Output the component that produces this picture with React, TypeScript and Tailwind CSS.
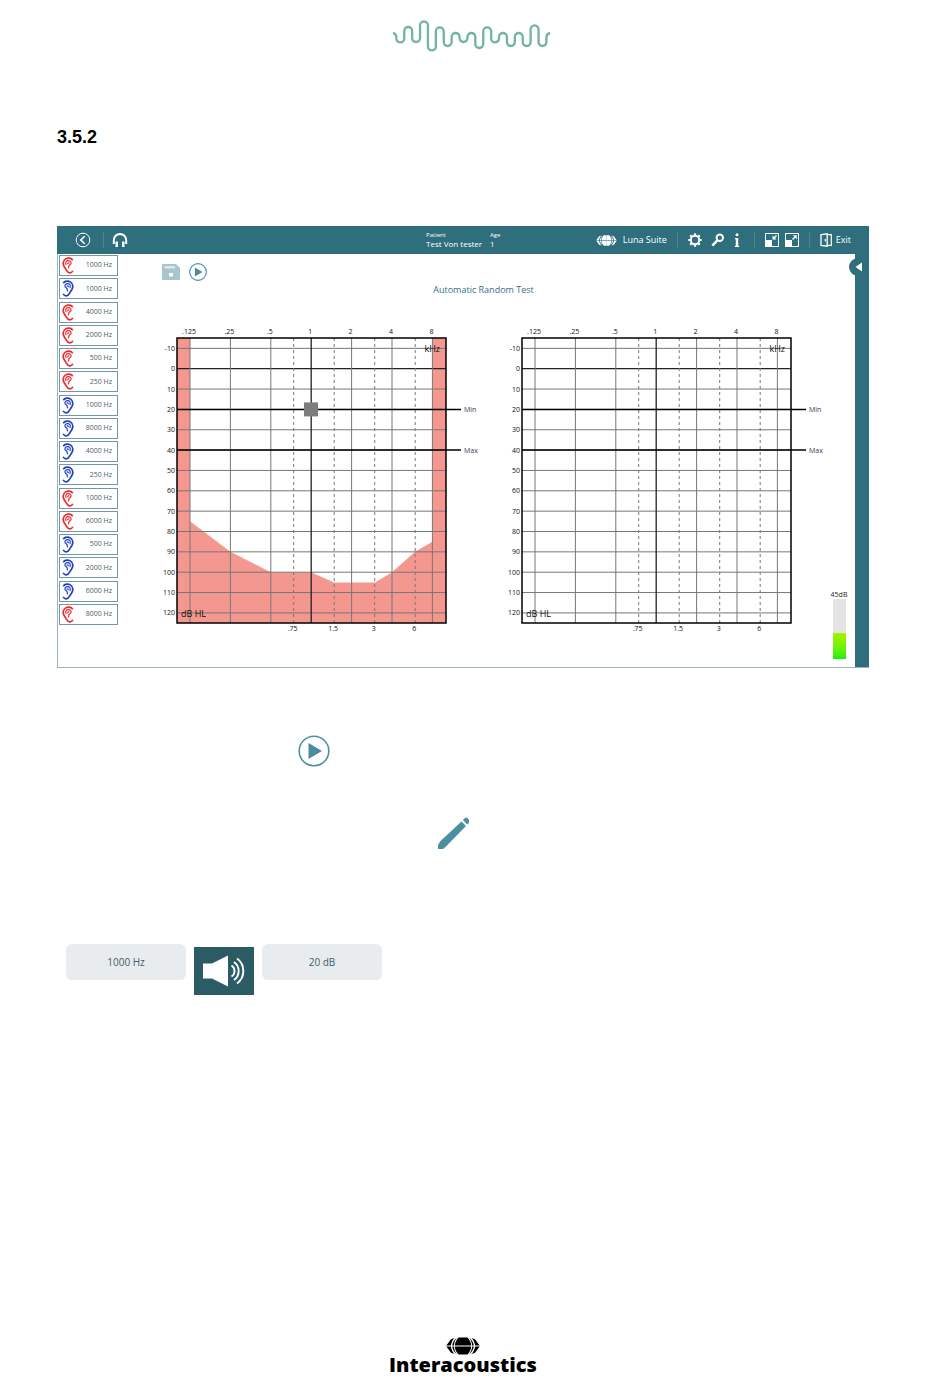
type Ear = "right" | "left";

const steps: { ear: Ear; hz: number }[] = [
  { ear: "right", hz: 1000 },
  { ear: "left", hz: 1000 },
  { ear: "right", hz: 4000 },
  { ear: "right", hz: 2000 },
  { ear: "right", hz: 500 },
  { ear: "right", hz: 250 },
  { ear: "left", hz: 1000 },
  { ear: "left", hz: 8000 },
  { ear: "left", hz: 4000 },
  { ear: "left", hz: 250 },
  { ear: "right", hz: 1000 },
  { ear: "right", hz: 6000 },
  { ear: "left", hz: 500 },
  { ear: "left", hz: 2000 },
  { ear: "left", hz: 6000 },
  { ear: "right", hz: 8000 },
];

// turning points of the wave, left to right
const waveLevels = [98, 52, 97, 35, 122, 53, 109, 70, 97, 70, 115, 53, 98, 70, 109, 70, 109, 47, 109];

function wavePath() {
  const r = 11.85;
  let x = 50;
  let d = "M40 70 Q50 72 50 84";
  waveLevels.forEach((y, i) => {
    const down = i % 2 === 0;
    const edge = down ? y - r : y + r;
    d += ` V${edge} A${r} ${r} 0 0 ${down ? 0 : 1} ${x + 2 * r} ${edge}`;
    x += 2 * r;
  });
  return d + ` V84 Q${x} 72 ${x + 11} 70`;
}

function Wave() {
  return (
    <svg width="160" height="34" viewBox="37 28 480 102" fill="none" aria-hidden="true">
      <path d={wavePath()} stroke="#68bb9b" strokeWidth="7" />
      <path d={wavePath()} stroke="#8fa79d" strokeWidth="2" />
    </svg>
  );
}

function EarIcon({ ear }: { ear: Ear }) {
  const color = ear === "right" ? "#ee2a2e" : "#2440c0";
  return (
    <svg width="12" height="17" viewBox="0 0 12 17" fill="none" stroke={color} strokeLinecap="round" aria-hidden="true">
      <g transform={ear === "left" ? "matrix(-1 0 0 1 12 0)" : undefined}>
        <path strokeWidth="1.700" d="M10.300 2.600C8.800.8 5.700.6 3.700 1.900 1.300 3.400.8 6.200 1.700 8.600c.7 1.900 2 3 2.900 4.700.8 1.600 1.900 2.600 3.400 2.500 1.200-.1 2-.6 2.500-1.400" />
        <path strokeWidth="1.200" d="M4 7.600C3.100 5.400 4.300 3.600 6.300 3.600c1.900 0 3 1.200 2.700 2.700-.3 1.300-1.700 1.400-2.100 2.400-.3.800.1 1.500-.5 2.200" />
        <path strokeWidth="1.100" d="M5.600 6.800c.3-.8.900-1.100 1.500-.9" />
      </g>
    </svg>
  );
}

function PlayIcon({ size, stroke }: { size: number; stroke: number }) {
  return (
    <svg width={size} height={size} viewBox="0 0 32 32" aria-hidden="true">
      <circle cx="16" cy="16" r="14.800" fill="none" stroke="#4d8fa0" strokeWidth={stroke} />
      <path d="M10.500 8 24 16 10.500 24z" fill="#4a8c9d" />
    </svg>
  );
}

function GlobeQuarter() {
  return (
    <>
      <path d="M17 .5h-4.500C10.500 2.500 9 5.500 8.800 8.500H17z" />
      <path d="M10.800.8C8.600 2.300 6.700 5.300 6.200 8.500h1.700C8.200 5.400 9.200 2.900 10.800.8z" />
      <path d="M8.500 1 5 2.200.3 8.500h4.500C5.300 5.600 6.500 3 8.500 1z" />
    </>
  );
}

function Globe({ width, height }: { width: number; height: number }) {
  return (
    <svg width={width} height={height} viewBox="0 0 34 18" fill="currentColor" aria-hidden="true">
      <GlobeQuarter />
      <g transform="matrix(-1 0 0 1 34 0)">
        <GlobeQuarter />
      </g>
      <g transform="matrix(1 0 0 -1 0 18)">
        <GlobeQuarter />
      </g>
      <g transform="matrix(-1 0 0 -1 34 18)">
        <GlobeQuarter />
      </g>
    </svg>
  );
}

function Divider() {
  return <span className="h-4 w-px bg-[#4f8592]" />;
}

function TopBar() {
  return (
    <header className="grid h-7 grid-cols-[5fr_6fr] items-center bg-[#2f6e7c] text-white">
      <div className="flex items-center gap-3 pl-[18px]">
        <button aria-label="Back">
          <svg width="16" height="16" viewBox="0 0 16 16" fill="none" stroke="currentColor">
            <circle cx="8" cy="8" r="6.800" />
            <path strokeWidth="1.600" d="M9.700 4.200 5.800 8l3.900 3.800" />
          </svg>
        </button>
        <Divider />
        <button aria-label="Headphones" className="-ml-1">
          <svg width="16" height="16" viewBox="0 0 16 16" fill="none" stroke="currentColor">
            <path strokeWidth="2" d="M1.800 12V8.200a6.200 6.200 0 0 1 12.400 0V12" />
            <path fill="currentColor" stroke="none" d="M3.500 9.500H6V15H3.500zM10 9.500h2.500V15H10z" />
          </svg>
        </button>
      </div>
      <div className="flex items-center justify-between pr-[18px]">
        <dl className="flex gap-2">
          <div>
            <dt className="text-[6px] leading-[8px]">Patient</dt>
            <dd className="text-[8px] leading-[10px]">Test Von tester</dd>
          </div>
          <div>
            <dt className="text-[6px] leading-[8px]">Age</dt>
            <dd className="text-[8px] leading-[10px]">1</dd>
          </div>
        </dl>
        <div className="flex items-center gap-[10px]">
          <span className="flex items-center gap-[6px] text-[9px]">
            <Globe width={21} height={11} />
            Luna Suite
          </span>
          <Divider />
          <div className="flex items-center gap-[9px] pr-1">
            <button aria-label="Settings">
              <svg width="14" height="14" viewBox="0 0 14 14" fill="none" stroke="currentColor">
                <circle cx="7" cy="7" r="4.200" strokeWidth="2" />
                <path strokeWidth="2.200" d="M7 .3v2M7 11.700v2M.3 7h2M11.700 7h2M2.300 2.300l1.300 1.300M10.400 10.400l1.300 1.300M2.300 11.700l1.300-1.300M10.400 3.600l1.300-1.300" />
              </svg>
            </button>
            <button aria-label="Tools">
              <svg width="14" height="14" viewBox="0 0 14 14" fill="none" stroke="currentColor">
                <circle cx="8.800" cy="4.800" r="3.200" strokeWidth="2" />
                <path strokeWidth="2.400" d="M6.600 7.200 1.300 12.700" />
              </svg>
            </button>
            <button aria-label="Information">
              <svg width="6" height="14" viewBox="0 0 6 14" fill="currentColor">
                <circle cx="3" cy="1.800" r="1.500" />
                <path d="M1 5h3.200v7.800h1V14H.8v-1.200h1V6.200H1z" />
              </svg>
            </button>
          </div>
          <Divider />
          <div className="flex items-center gap-[6px]">
            <button aria-label="Shrink window">
              <svg width="14" height="14" viewBox="0 0 14 14" fill="none" stroke="currentColor">
                <path d="M.5.5h13v13H.5z" />
                <path fill="currentColor" stroke="none" d="M0 7h7v7H0zM7.500 2.500v4h4z" />
                <path strokeWidth="1.400" d="m8.500 5.500 3-3" />
              </svg>
            </button>
            <button aria-label="Enlarge window">
              <svg width="14" height="14" viewBox="0 0 14 14" fill="none" stroke="currentColor">
                <path d="M.5.5h13v13H.5z" />
                <path fill="currentColor" stroke="none" d="M0 7h7v7H0zM7.800 2.200h4v4z" />
                <path strokeWidth="1.400" d="m7.500 6.500 3-3" />
              </svg>
            </button>
          </div>
          <Divider />
          <button className="flex items-center gap-1 text-[9px]">
            <svg width="12" height="14" viewBox="0 0 12 14" fill="none" stroke="currentColor" aria-hidden="true">
              <path strokeWidth="1.200" d="M7 1.600h4.300v10.800H7" />
              <path strokeWidth="1.300" d="M1 1.600 7.200.8v12.400L1 12.400z" />
              <path strokeWidth="1.200" d="M5.300 6v2.500" />
            </svg>
            Exit
          </button>
        </div>
      </div>
    </header>
  );
}

const colX = (i: number) => 34 + i * 40.4;
const rowY = (db: number) => 46.7 + db * 2.035;
const topLabels = [".125", ".25", ".5", "1", "2", "4", "8"];
const halfOctaves = [
  { x: 137.7, label: ".75" },
  { x: 178.2, label: "1.5" },
  { x: 218.7, label: "3" },
  { x: 259.2, label: "6" },
];
const levels = [-10, 0, 10, 20, 30, 40, 50, 60, 70, 80, 90, 100, 110, 120];

function Audiogram({ label, active = false }: { label: string; active?: boolean }) {
  return (
    <svg viewBox="0 0 330 314" className="min-w-0 flex-1" role="img" aria-label={label} fontSize="7" fill="#111">
      {active && (
        <path
          fill="#f4988f"
          d={`M21 16H34V${rowY(75)}L${colX(1)} ${rowY(90)}L${colX(2)} ${rowY(100)}H${colX(3)}L178 ${rowY(105)}H219L${colX(5)} ${rowY(100)}L259 ${rowY(90)}L${colX(6)} ${rowY(85)}V16H290V301H21Z`}
        />
      )}
      {levels.map((db) => (
        <g key={db}>
          <path d={`M21 ${rowY(db)}H290`} stroke={db === 0 ? "#222" : "#777"} strokeWidth={db === 0 ? 1.3 : 1} />
          <text x="19" y={rowY(db) + 2.5} textAnchor="end">
            {db}
          </text>
        </g>
      ))}
      {topLabels.map((text, i) => (
        <g key={text}>
          <path d={`M${colX(i)} 16V301`} stroke={text === "1" ? "#222" : "#777"} strokeWidth={text === "1" ? 1.3 : 1} />
          <text x={colX(i) - 1} y="12" textAnchor="middle">
            {text}
          </text>
        </g>
      ))}
      {halfOctaves.map(({ x, label: text }) => (
        <g key={text}>
          <path d={`M${x} 16V301`} stroke="#777" strokeDasharray="3 3" />
          <text x={x - 1} y="309" textAnchor="middle">
            {text}
          </text>
        </g>
      ))}
      <path d="M21 16H290V301H21Z" fill="none" stroke="#000" strokeWidth="1.500" />
      <path d={`M21 ${rowY(20)}H305M21 ${rowY(40)}H305`} stroke="#000" strokeWidth="1.500" />
      {active && <rect x="148" y={rowY(20) - 7} width="14" height="14" fill="#7d7d7d" />}
      <text x="308" y={rowY(20) + 2.5} fill="#3d3550">Min</text>
      <text x="308" y={rowY(40) + 2.5} fill="#3d3550">Max</text>
      <text x="284" y="30" textAnchor="end" fontSize="9">kHz</text>
      <text x="25" y="295" fontSize="9">dB HL</text>
    </svg>
  );
}

function TestWindow() {
  return (
    <section className="font-['Open_Sans','Noto_Sans',sans-serif]">
      <TopBar />
      <div className="flex border-b border-l border-[#9db5bd]">
        <ul className="flex h-[371px] w-[60px] flex-col justify-between pt-px pl-px">
          {steps.map((step, i) => (
            <li key={i}>
              <button className="flex h-[21px] w-full items-center justify-between border border-[#7297a6] pr-[5px] pl-[2px] text-[7px] text-[#4b5f68]">
                <EarIcon ear={step.ear} />
                {step.hz} Hz
              </button>
            </li>
          ))}
        </ul>
        <main className="flex-1 pt-[9px] pr-2 pb-2 pl-[38px]">
          <div className="flex gap-[9px] pl-[6px]">
            <button aria-label="Save">
              <svg width="18" height="18" viewBox="0 0 18 18">
                <path d="M0 1h14l4 4v12H0z" fill="#a6c5cd" />
                <path d="M2.500 3h10.500v2.500H2.500z" fill="#dbe8eb" />
                <path d="M7 10h4v3.500H7z" fill="#fff" />
              </svg>
            </button>
            <button aria-label="Play">
              <PlayIcon size={18} stroke={2} />
            </button>
          </div>
          <h2 className="pr-9 text-center text-[9px] leading-[18px] font-medium text-[#37708a]">
            Automatic Random Test
          </h2>
          <div className="mt-[23px] flex items-start">
            <div className="flex flex-1 gap-[15px]">
              <Audiogram label="Right ear audiogram" active />
              <Audiogram label="Left ear audiogram" />
            </div>
            <div className="flex w-4 flex-col items-center self-end text-[7px] leading-[8px] text-[#222]">
              <span>45dB</span>
              <div className="flex h-[60px] w-[13px] items-end bg-[#e4e4e4]">
                <div className="h-[26px] w-full bg-linear-to-t from-[#00f010] to-[#a5f200]" />
              </div>
            </div>
            <div className="h-[337px]" />
          </div>
        </main>
        <aside className="relative w-[14px] bg-[#2f6e7c]">
          <button aria-label="Open side panel" className="absolute top-1 -left-[6px] size-[18px] rounded-full bg-[#2f6e7c]">
            <svg width="18" height="18" viewBox="0 0 18 18">
              <path d="M13 4.500v9L6.500 9z" fill="#fff" />
            </svg>
          </button>
        </aside>
      </div>
    </section>
  );
}

export default function App() {
  return (
    <div className="min-h-screen bg-white pr-[81px] pl-[57px]">
      <div className="flex justify-center pt-[19px] pl-[18px]">
        <Wave />
      </div>
      <h1 className="mt-[72px] mb-[77px] font-['Liberation_Sans',Arial,sans-serif] text-[18px] leading-6 font-bold text-black">
        3.5.2
      </h1>
      <TestWindow />
      <div className="mt-[67px] pl-[241px]">
        <button aria-label="Start test" className="block">
          <PlayIcon size={32} stroke={1.6} />
        </button>
      </div>
      <div className="mt-[50px] pl-[380px]">
        <button aria-label="Edit" className="block">
          <svg width="32" height="32" viewBox="0 0 32 32" fill="#4d8fa0">
            <path d="M24.500 4.500 29 9 8.500 30 6 32H1v-4l2.500-4z" />
            <path d="M26 3 28.500.5l2 .5 2 2.500v2L30 7.500z" />
          </svg>
        </button>
      </div>
      <div className="mt-[95px] flex items-start gap-2 pl-[9px] font-['Open_Sans','Noto_Sans',sans-serif] text-[10px] text-[#3f5f6b]">
        <span className="flex h-9 w-[120px] items-center justify-center rounded-md bg-[#e8ecee]">1000 Hz</span>
        <button aria-label="Present tone" className="mt-[3px] flex h-12 w-[60px] items-center justify-center bg-[#2b5c66]">
          <svg width="44" height="34" viewBox="0 0 44 34" fill="none" stroke="#fff">
            <path fill="#fff" stroke="none" d="M1 9.500h9L26 1.500v31l-16-8H1z" />
            <path strokeWidth="1.900" d="M29.500 11.500a6.500 6.500 0 0 1 0 11M32 8a11 11 0 0 1 0 18M35 4.500a15.500 15.500 0 0 1 0 25" />
          </svg>
        </button>
        <span className="flex h-9 w-[120px] items-center justify-center rounded-md bg-[#e8ecee]">20 dB</span>
      </div>
      <footer className="mt-[342px] flex flex-col items-center text-black">
        <Globe width={34} height={18} />
        <span className="font-['Open_Sans','Noto_Sans',sans-serif] text-[20px] leading-5 font-extrabold">Interacoustics</span>
      </footer>
    </div>
  );
}
